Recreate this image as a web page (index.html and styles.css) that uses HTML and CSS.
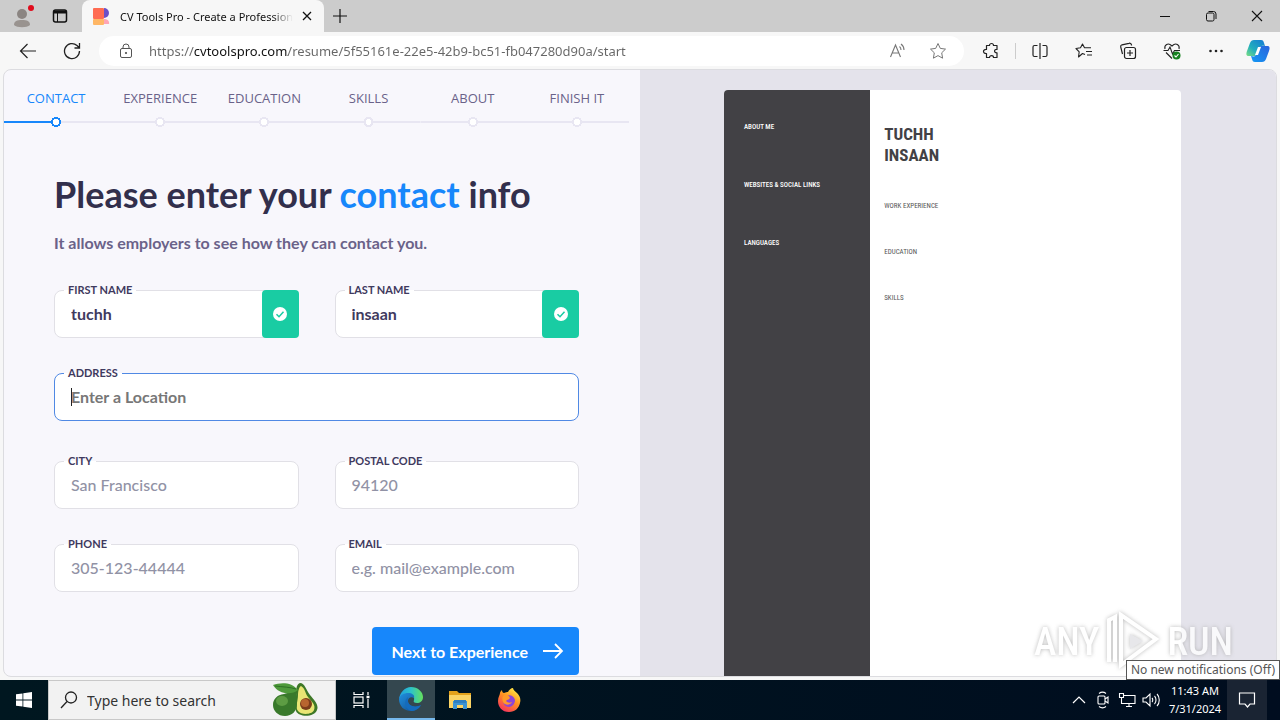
FILE: index.html
```html
<!DOCTYPE html>
<html lang="en">
<head>
    <meta charset="UTF-8">
    <meta name="viewport" content="width=device-width, initial-scale=1.0">
    <title>CV Tools Pro - Create a Professional Resume</title>
    <link rel="stylesheet" href="styles.css">
</head>
<body>
    <header class="tab-strip">
        <button class="profile" aria-label="Profile">
            <svg width="26" height="26" viewBox="0 0 26 26"><circle cx="13" cy="11" r="5" fill="#8b8582"/><path d="M5 22c0-4 3-5 8-5s8 1 8 5c-3 3-13 3-16 0z" fill="#99938f"/><circle cx="22" cy="5" r="3" fill="#e00b1c"/></svg>
        </button>
        <button class="tab-actions" aria-label="Tab actions">
            <svg width="16" height="16" viewBox="0 0 16 16" fill="none" stroke="#111"><rect x="1.500" y="2" width="13" height="12" rx="2" stroke-width="1.500"/><path d="M2 4h12" stroke-width="3"/><path d="M5.500 5v9"/></svg>
        </button>
        <div class="tab">
            <svg width="17" height="17" viewBox="0 0 17 17"><rect width="11" height="11" rx="1" fill="#ff6b52"/><path d="M11 0a5 5 0 0 1 0 10z" fill="#6b50c8"/><rect y="11" width="11" height="6" rx="1" fill="#ffb765"/><path d="M11 11h1a4 4 0 0 1 4 5h-5z" fill="#ffa5b5"/></svg>
            <span class="tab-title">CV Tools Pro - Create a Professional Resume</span>
            <button class="tab-close" aria-label="Close tab">
                <svg width="10" height="10" viewBox="0 0 10 10" stroke="#111" stroke-width="1.300"><path d="M1 1l8 8M9 1l-8 8"/></svg>
            </button>
        </div>
        <button class="new-tab" aria-label="New tab">
            <svg width="14" height="14" viewBox="0 0 14 14" stroke="#111" stroke-width="1.200"><path d="M7 0v14M0 7h14"/></svg>
        </button>
        <div class="window-buttons">
            <button aria-label="Minimize"><svg width="12" height="12" viewBox="0 0 12 12" stroke="#111"><path d="M1 6.500h10"/></svg></button>
            <button aria-label="Restore"><svg width="12" height="12" viewBox="0 0 12 12" fill="none" stroke="#111"><rect x="1.500" y="3" width="7.500" height="8" rx="1.500"/><path d="M3.500 1.500h5a2.500 2.500 0 0 1 2.500 2.500v5"/></svg></button>
            <button aria-label="Close"><svg width="12" height="12" viewBox="0 0 12 12" stroke="#111" stroke-width="1.100"><path d="M1 1l10 10M11 1L1 11"/></svg></button>
        </div>
    </header>

    <nav class="toolbar">
        <button aria-label="Back"><svg width="18" height="18" viewBox="0 0 18 18" fill="none" stroke="#222" stroke-width="1.200"><path d="M17 9H2M8.500 2L1.500 9l7 7"/></svg></button>
        <button aria-label="Refresh"><svg width="18" height="18" viewBox="0 0 18 18" fill="none" stroke="#222" stroke-width="1.300"><path d="M16.500 9A7.500 7.500 0 1 1 14 3.500l2 2M16.500 1v5h-5"/></svg></button>
        <div class="address-bar">
            <svg width="14" height="16" viewBox="0 0 14 16" fill="none" stroke="#555"><rect x="1.500" y="5.500" width="11" height="9" rx="1.500"/><path d="M4 5.500V4a3 3 0 0 1 6 0v1.500"/><circle cx="7" cy="10" r=".7" fill="#555"/></svg>
            <input class="url" type="text" aria-label="Address and search bar" value="https://cvtoolspro.com/resume/5f55161e-22e5-42b9-bc51-fb047280d90a/start">
            <button aria-label="Read aloud"><svg width="18" height="18" viewBox="0 0 18 18" fill="none" stroke="#777" stroke-width="1.100"><path d="M1.500 15L6.500 3l5 12M3.200 11h6.600M10.500 4.500c1 .8 1.500 2 1.500 3.500M12 2c2 1.500 3 3.300 3 6"/></svg></button>
            <button aria-label="Add to favorites"><svg width="18" height="18" viewBox="0 0 18 18" fill="none" stroke="#777" stroke-linejoin="round"><path d="M9 1.500l2.300 4.900 5.200.7-3.800 3.700.9 5.400L9 13.600l-4.600 2.600.9-5.400L1.500 7.100l5.200-.7z"/></svg></button>
        </div>
        <button aria-label="Extensions"><svg width="18" height="18" viewBox="0 0 18 18" fill="none" stroke="#222" stroke-width="1.200" stroke-linejoin="round"><path d="M4.500 3.500h3a2 2 0 0 1 4 0h3.500v4c-3-.5-3.500 3.500 0 3.300v4.700h-3.500c0-2.500-4-2.500-4 0h-3v-4c-4 .3-4-4.500 0-4z"/></svg></button>
        <span class="divider"></span>
        <button aria-label="Split screen"><svg width="18" height="18" viewBox="0 0 18 18" fill="none" stroke="#222" stroke-width="1.200"><path d="M9 1v16M6.500 3.500h-3a1.500 1.500 0 0 0-1.500 1.500v8a1.500 1.500 0 0 0 1.500 1.500h3M11.500 3.500h3a1.500 1.500 0 0 1 1.500 1.500v8a1.500 1.500 0 0 1-1.500 1.500h-3"/></svg></button>
        <button aria-label="Favorites"><svg width="18" height="18" viewBox="0 0 18 18" fill="none" stroke="#222" stroke-width="1.100" stroke-linejoin="round"><path d="M10 12.500l-2.500-1-4 3.500.7-5.200L1 6.500l4.500-.8L7.500 2l2 3.700H16M11 9.500h6M12 13h5"/></svg></button>
        <button aria-label="Collections"><svg width="18" height="18" viewBox="0 0 18 18" fill="none" stroke="#222" stroke-width="1.200"><rect x="5.500" y="5.500" width="11" height="11" rx="2"/><path d="M11 8v6M8 11h6M3.500 12L1.700 5A2 2 0 0 1 3 2.800l7-1.500a2 2 0 0 1 2.500 1.500v.7"/></svg></button>
        <button aria-label="Browser essentials"><svg width="18" height="18" viewBox="0 0 18 18" fill="none" stroke="#222" stroke-width="1.100"><path d="M2 7C1 3 5 0 9 4c4-4 8-1 7 3M.5 8.500H5L7 5l2.500 7 2-3.500h5.500M3 10.500l6 6"/><circle cx="13.500" cy="13.500" r="4" fill="#16811f" stroke="none"/><path d="M11.500 13.500l1.500 1.500 2.500-3" stroke="#fff"/></svg></button>
        <button aria-label="Settings and more"><svg width="18" height="18" viewBox="0 0 18 18" fill="#222"><circle cx="3.500" cy="9" r="1.300"/><circle cx="9" cy="9" r="1.300"/><circle cx="14.500" cy="9" r="1.300"/></svg></button>
        <button class="copilot" aria-label="Copilot">
            <svg width="24" height="24" viewBox="0 0 24 24">
                <defs>
                    <linearGradient id="copilotLeft" x1="0" y1="1" x2="1" y2="0"><stop offset="0" stop-color="#7ade82"/><stop offset=".4" stop-color="#21aebd"/><stop offset="1" stop-color="#1578d5"/></linearGradient>
                    <linearGradient id="copilotRight" x1="0" y1="1" x2="1" y2="0"><stop offset="0" stop-color="#1399f4"/><stop offset="1" stop-color="#2b63dc"/></linearGradient>
                </defs>
                <path d="M8 1h7c2 0 2.500 1 3 3l1 3c-4-1-5 0-6 3l-2 5c-.6 2-2 2-4 2H3c-3 0-3-2-2-5l3-8c.8-2 2-3 4-3z" fill="url(#copilotLeft)"/>
                <path d="M16 23H9c-2 0-2.500-1-3-3l-1-3c4 1 5 0 6-3l2-5c.6-2 2-2 4-2h4c3 0 3 2 2 5l-3 8c-.8 2-2 3-4 3z" fill="url(#copilotRight)"/>
                <path d="M12 8h3l-3 8H9z" fill="#fff"/>
            </svg>
        </button>
    </nav>

    <main class="page">
        <section class="editor">
            <ol class="steps">
                <li class="active"><a href="#contact">CONTACT</a></li>
                <li><a href="#experience">EXPERIENCE</a></li>
                <li><a href="#education">EDUCATION</a></li>
                <li><a href="#skills">SKILLS</a></li>
                <li><a href="#about">ABOUT</a></li>
                <li><a href="#finish">FINISH IT</a></li>
            </ol>

            <form class="contact-form">
                <h1>Please enter your <em>contact</em> info</h1>
                <p class="subtitle">It allows employers to see how they can contact you.</p>

                <div class="fields">
                    <div class="field valid">
                        <label for="firstName">FIRST NAME</label>
                        <input id="firstName" type="text" value="tuchh">
                        <span class="check"><svg width="14" height="14" viewBox="0 0 14 14"><circle cx="7" cy="7" r="7" fill="#fff"/><path d="M3.500 7.200L6 9.700l4.500-5" fill="none" stroke="#19cca3" stroke-width="1.500"/></svg></span>
                    </div>
                    <div class="field valid">
                        <label for="lastName">LAST NAME</label>
                        <input id="lastName" type="text" value="insaan">
                        <span class="check"><svg width="14" height="14" viewBox="0 0 14 14"><circle cx="7" cy="7" r="7" fill="#fff"/><path d="M3.500 7.200L6 9.700l4.500-5" fill="none" stroke="#19cca3" stroke-width="1.500"/></svg></span>
                    </div>
                    <div class="field wide focused">
                        <label for="address">ADDRESS</label>
                        <input id="address" type="text" placeholder="Enter a Location">
                    </div>
                    <div class="field">
                        <label for="city">CITY</label>
                        <input id="city" type="text" placeholder="San Francisco">
                    </div>
                    <div class="field">
                        <label for="postal">POSTAL CODE</label>
                        <input id="postal" type="text" placeholder="94120">
                    </div>
                    <div class="field">
                        <label for="phone">PHONE</label>
                        <input id="phone" type="tel" placeholder="305-123-44444">
                    </div>
                    <div class="field">
                        <label for="email">EMAIL</label>
                        <input id="email" type="email" placeholder="e.g. mail@example.com">
                    </div>
                </div>

                <button class="next" type="button">Next to Experience
                    <svg width="22" height="16" viewBox="0 0 22 16" fill="none" stroke="#fff" stroke-width="1.800"><path d="M1 8h19M13 1l7 7-7 7"/></svg>
                </button>
            </form>
        </section>

        <section class="preview">
            <article class="resume">
                <aside class="resume-side">
                    <h3>ABOUT ME</h3>
                    <h3>WEBSITES &amp; SOCIAL LINKS</h3>
                    <h3>LANGUAGES</h3>
                </aside>
                <div class="resume-main">
                    <h2>TUCHH<br>INSAAN</h2>
                    <h3>WORK EXPERIENCE</h3>
                    <h3>EDUCATION</h3>
                    <h3>SKILLS</h3>
                </div>
            </article>
        </section>
    </main>

    <footer class="taskbar">
        <button class="start" aria-label="Start"><svg width="16" height="16" viewBox="0 0 16 16" fill="#fff"><path d="M0 2.300l6.500-.9v6.200H0zM7.300 1.300L16 0v7.600H7.300zM0 8.400h6.500v6.200L0 13.700zM7.300 8.400H16V16l-8.700-1.300z"/></svg></button>
        <div class="search">
            <svg width="18" height="18" viewBox="0 0 18 18" fill="none" stroke="#222" stroke-width="1.300"><circle cx="11" cy="6.500" r="5.500"/><path d="M7 10.500l-6 6.500"/></svg>
            <input type="text" aria-label="Search" placeholder="Type here to search">
            <svg width="46" height="36" viewBox="0 0 46 36">
                <path d="M28 1c5 0 6 7 10 12 5 6 9 10 7 15-2 7-18 8-21 1-3-6 1-12 0-18 0-5 1-9 4-10z" fill="#3e7827"/>
                <path d="M29 4c4 2 4 7 7 11 4 5 8 8 6 13-2 5-13 5-16 1s0-10 0-16c0-4 1-8 3-9z" fill="#e9e574"/>
                <circle cx="34" cy="22" r="6" fill="#7c3d1b"/><circle cx="33" cy="21" r="4" fill="#b8652f"/>
                <path d="M12 12c5-1 8-3 12-4 1 6 1 8 1 14 0 7-5 12-12 12S1 29 1 23s4-10 11-11z" fill="#39792b"/>
                <ellipse cx="10" cy="19" rx="6" ry="5" fill="#5d9c43"/>
                <path d="M1 3c8-3 19-3 25 5-6 5-19 5-25-5z" fill="#4f9a3b"/>
                <path d="M3 4c8 1 15 1 21 3" fill="none" stroke="#2e7025"/>
            </svg>
        </div>
        <div class="apps">
            <button aria-label="Task View"><svg width="18" height="18" viewBox="0 0 18 18" fill="none" stroke="#fff" stroke-width="1.200"><path d="M1 1v2.500h9V1M1 17v-2.500h9V17M15 1v3M15 8v9"/><rect x="1" y="6" width="9" height="6"/><path d="M13.500 6h3" stroke-width="2.500"/></svg></button>
            <button class="running" aria-label="Microsoft Edge">
                <svg width="24" height="24" viewBox="0 0 24 24">
                    <defs>
                        <linearGradient id="edgeTop" x1="0" y1="0" x2="1" y2="0"><stop offset="0" stop-color="#1f9de0"/><stop offset=".5" stop-color="#2dc3c9"/><stop offset="1" stop-color="#65e05c"/></linearGradient>
                        <linearGradient id="edgeBottom" x1="0" y1="0" x2="1" y2="1"><stop offset="0" stop-color="#2090e0"/><stop offset="1" stop-color="#114a8b"/></linearGradient>
                    </defs>
                    <path d="M0 12C1 5 6 0 12 0c7 0 12 5 12 10 0 4-3 6-6 6-3 0-4-1-3-3 1-3-2-5-6-5-5 0-8 2-9 4z" fill="url(#edgeTop)"/>
                    <path d="M0 12c1-4 5-6 9-6 4 0 7 2 6 5-3-2-6 0-6 3 0 4 6 8 13 4-3 4-6 6-10 6C5 24 0 19 0 12z" fill="url(#edgeBottom)"/>
                    <path d="M9 10c-5 4-3 12 3 14 4 0 8-2 10-6-6 3-12 1-13-3-.5-2 0-4 0-5z" fill="#146bbd"/>
                </svg>
            </button>
            <button aria-label="File Explorer"><svg width="22" height="20" viewBox="0 0 22 20"><path d="M0 1h8l2 2h12v5H0z" fill="#e4a21b"/><path d="M0 5h22v13H0z" fill="#fbd465"/><path d="M4 11h14v8h-4v-4H8v4H4z" fill="#3c94d3"/><path d="M5 10h12v3H5z" fill="#2d7fc1"/></svg></button>
            <button aria-label="Firefox">
                <svg width="24" height="24" viewBox="0 0 24 24">
                    <defs><linearGradient id="foxFire" x1=".8" y1="0" x2=".2" y2="1"><stop offset="0" stop-color="#fff04a"/><stop offset=".45" stop-color="#ff9320"/><stop offset="1" stop-color="#f52c62"/></linearGradient></defs>
                    <path d="M5 2c0 2 1 3 2 3 2-1 3-1 4-1 1-2 3-4 5-4 0 2 2 3 4 5 3 3 4 6 3 10-1 5-5 9-11 9C5 24 1 19 1 13c0-4 2-6 2-8 0-1 1-2 2-3z" fill="url(#foxFire)"/>
                    <path d="M8 9c3-3 9-2 10 3 0 4-3 7-6 7-4 0-7-4-5-7 2-1 4 0 5-1-1-1-3-1-4-2z" fill="#8d45d8"/>
                    <path d="M7 7c3-1 5 0 6 3-1 2-3 1-4 3 2 2 4 2 6 1-1 3-7 4-9 0-1-3-1-5 1-7z" fill="#ff9a28"/>
                </svg>
            </button>
        </div>
        <div class="tray">
            <button aria-label="Show hidden icons"><svg width="14" height="14" viewBox="0 0 14 14" fill="none" stroke="#fff" stroke-width="1.200"><path d="M1 10l6-6 6 6"/></svg></button>
            <button aria-label="Meet now"><svg width="16" height="18" viewBox="0 0 16 18" fill="none" stroke="#fff" stroke-width="1.100"><rect x="3" y="5" width="7" height="8" rx="1"/><path d="M10 8l3-2v6l-3-2M4 2.500c2-1.500 5-1.500 7 0M4 15.500c2 1.500 5 1.500 7 0"/></svg></button>
            <button aria-label="Network"><svg width="18" height="16" viewBox="0 0 18 16" fill="none" stroke="#fff" stroke-width="1.100"><path d="M6 3.500h11v8H5M11 11.500v3M8 14.500h6M1.500 1.500h4v4h-4zM3.500 5.500v6h3"/></svg></button>
            <button aria-label="Volume"><svg width="18" height="16" viewBox="0 0 18 16" fill="none" stroke="#fff" stroke-width="1.100"><path d="M1 6h3l4-4v12l-4-4H1zM10 6c1 1 1 3 0 4M12.500 4c2 2 2 6 0 8M15 2c3 3 3 9 0 12"/></svg></button>
            <time class="clock">11:43 AM<br>7/31/2024</time>
            <button class="notifications" aria-label="Notifications"><svg width="18" height="18" viewBox="0 0 18 18" fill="none" stroke="#fff" stroke-width="1.200"><path d="M1.500 2h15v11H12l-2.500 3L7 13H1.500z"/></svg></button>
        </div>
        <div class="tooltip">No new notifications (Off)</div>
        <div class="watermark">
            <span>ANY</span>
            <svg width="60" height="64" viewBox="0 0 60 64" fill="none" stroke="#fff" stroke-width="4"><path d="M6 52V10l6-3v45"/><path d="M18 5l35 24-35 26z"/><path d="M27 24l13 7-13 8z" fill="#e2e2e6" stroke="none"/></svg>
            <span>RUN</span>
        </div>
    </footer>
</body>
</html>
```
FILE: styles.css
```css
* {
    box-sizing: border-box;
}

body {
    margin: 0;
    height: 100vh;
    display: flex;
    flex-direction: column;
    overflow: hidden;
    background: #f7f7f7;
    font-family: "Noto Sans", sans-serif;
    color: #111;
}

button,
input {
    font: inherit;
    color: inherit;
    border: none;
    background: none;
    padding: 0;
    margin: 0;
    outline: none;
}

button {
    display: flex;
    align-items: center;
    justify-content: center;
    flex-shrink: 0;
    cursor: pointer;
}

/* Browser tabs */
.tab-strip {
    display: flex;
    height: 32px;
    flex-shrink: 0;
    background: #cccccc;
}

.profile {
    width: 44px;
}

.tab-actions {
    width: 32px;
    margin-right: 6px;
}

.tab {
    display: flex;
    align-items: center;
    width: 242px;
    padding: 0 11px;
    border-radius: 8px 8px 0 0;
    background: #f7f7f7;
}

.tab-title {
    flex: 1;
    margin-left: 10px;
    font-size: 11px;
    white-space: nowrap;
    overflow: hidden;
    mask-image: linear-gradient(90deg, #000 88%, transparent);
}

.tab-close {
    width: 24px;
    height: 24px;
    margin-left: 2px;
    margin-right: -6px;
}

.new-tab {
    width: 32px;
}

.window-buttons {
    display: flex;
    margin-left: auto;
}

.window-buttons button {
    width: 46px;
}

/* Browser toolbar */
.toolbar {
    display: flex;
    align-items: center;
    height: 37px;
    flex-shrink: 0;
    padding: 0 2px 0 6px;
}

.toolbar > button {
    width: 44px;
    height: 32px;
}

.toolbar .copilot {
    width: 40px;
}

.address-bar {
    flex: 1;
    display: flex;
    align-items: center;
    height: 30px;
    margin: 0 5px;
    padding: 0 6px 0 20px;
    border-radius: 15px;
    background: #fff;
}

.address-bar button {
    width: 40px;
    height: 28px;
}

.url {
    flex: 1;
    min-width: 0;
    margin-left: 16px;
    font-size: 13px;
    color: transparent;
    caret-color: #111;
    background: linear-gradient(90deg, #666 45px, #111 45px, #111 139px, #666 139px);
    background-clip: text;
}

.divider {
    width: 1px;
    height: 16px;
    margin: 0 2px;
    background: #ccc;
}

/* Web page */
.page {
    flex: 1;
    min-height: 0;
    display: grid;
    grid-template-columns: 1fr 1fr;
    margin: 0 3px 3px;
    overflow: hidden;
    border: 1px solid #dcdce0;
    border-radius: 8px;
    background: #f8f7fc;
    font-family: Lato, sans-serif;
}

.editor {
    min-height: 0;
    overflow: hidden;
}

.steps {
    display: grid;
    grid-template-columns: repeat(6, 1fr);
    margin: 0 11px 0 0;
    padding: 19px 0 0;
    list-style: none;
    font-family: "Open Sans", sans-serif;
    font-size: 13px;
    line-height: 18px;
    text-align: center;
}

.steps a {
    color: #6a6289;
    text-decoration: none;
    white-space: nowrap;
}

.steps li::after {
    content: "";
    display: block;
    height: 10px;
    margin-top: 10px;
    background:
        radial-gradient(circle at center, #fff 3px, #e8e6f2 3px, #e8e6f2 5px, transparent 5px),
        linear-gradient(#e8e6f2, #e8e6f2) center / 100% 2px no-repeat;
}

.steps .active a {
    color: #1787fb;
}

.steps .active::after {
    background:
        radial-gradient(circle at center, #fff 3px, #1787fb 3px, #1787fb 5px, transparent 5px),
        linear-gradient(90deg, #1787fb 50%, #e8e6f2 50%) center / 100% 2px no-repeat;
}

.contact-form {
    padding: 46px 61px 0 50px;
}

.contact-form h1 {
    margin: 0;
    font-size: 36px;
    line-height: 42px;
    font-weight: 700;
    color: #322f4c;
    white-space: nowrap;
}

.contact-form em {
    font-style: normal;
    color: #1787fb;
}

.subtitle {
    margin: 18px 0 37px;
    font-size: 16px;
    line-height: 20px;
    font-weight: 700;
    color: #6a6289;
}

.fields {
    display: grid;
    grid-template-columns: repeat(2, minmax(0, 1fr));
    gap: 35px 36px;
}

.field {
    position: relative;
    display: flex;
    height: 48px;
    border: 1px solid #e1e0e6;
    border-radius: 8px;
    background: #fff;
}

.field label {
    position: absolute;
    top: -8px;
    left: 9px;
    padding: 0 4px;
    font-size: 11px;
    line-height: 14px;
    font-weight: 700;
    color: #3f3a5e;
    background: linear-gradient(#f8f7fc 50%, #fff 50%);
}

.field input {
    flex: 1;
    min-width: 0;
    padding: 0 16px 2px;
    border-radius: 8px;
    font-size: 16px;
    font-weight: 700;
    color: #3f3a5e;
}

.field input::placeholder {
    font-weight: 500;
    color: #9192a5;
    opacity: 1;
}

.wide {
    grid-column: 1 / -1;
    margin-bottom: 5px;
}

.focused {
    border-color: #5089e4;
}

.focused input {
    background: linear-gradient(#222, #222) 16px center / 1px 18px no-repeat;
}

.field.focused input::placeholder {
    font-weight: 700;
    color: #777;
}

.check {
    display: flex;
    align-items: center;
    justify-content: center;
    width: 37px;
    margin: -1px;
    border-radius: 4px;
    background: #19cca3;
}

.next {
    gap: 14px;
    height: 48px;
    margin: 35px 0 0 auto;
    padding: 0 15px 0 19px;
    border-radius: 4px;
    font-size: 16px;
    font-weight: 700;
    color: #fff;
    background: #1787fb;
}

/* Resume preview */
.preview {
    display: flex;
    min-height: 0;
    padding: 20px 95px 0 84px;
    background: #e4e3eb;
}

.resume {
    flex: 1;
    display: grid;
    grid-template-columns: 32% 1fr;
    border-radius: 4px 4px 0 0;
    overflow: hidden;
    background: #fff;
    font-family: "Roboto Condensed", Roboto, sans-serif;
}

.resume-side {
    padding: 30px 20px;
    background: #424145;
}

.resume h3 {
    margin: 0;
    font-size: 7px;
    line-height: 14px;
    font-weight: 500;
    white-space: nowrap;
}

.resume-side h3 {
    margin-bottom: 44px;
    color: #fff;
}

.resume-main {
    padding: 34px 14px;
}

.resume-main h2 {
    margin: 0 0 33px;
    font-size: 17px;
    line-height: 21px;
    color: #424145;
}

.resume-main h3 {
    margin-bottom: 32px;
    font-weight: 400;
    color: #555;
}

/* Windows taskbar */
.taskbar {
    position: relative;
    display: flex;
    height: 40px;
    flex-shrink: 0;
    background: linear-gradient(90deg, #001720, #000d1f);
    color: #fff;
}

.start {
    width: 48px;
}

.search {
    display: flex;
    align-items: center;
    width: 288px;
    padding: 0 17px 0 11px;
    border: 1px solid #c8c8c8;
    background: #f2f2f2;
}

.search input {
    flex: 1;
    min-width: 0;
    margin-left: 9px;
    font-size: 14px;
}

.search input::placeholder {
    color: #333;
    opacity: 1;
}

.apps {
    display: flex;
    gap: 1px;
    margin-left: 2px;
}

.apps button {
    width: 48px;
}

.apps .running {
    background: #34474f;
    border-bottom: 2px solid #76b9ed;
}

.tray {
    display: flex;
    margin-left: auto;
    padding-right: 13px;
}

.tray button {
    width: 24px;
}

.clock {
    width: 64px;
    padding-top: 2px;
    font-size: 11px;
    line-height: 18px;
    text-align: center;
    white-space: nowrap;
}

.tray .notifications {
    width: 40px;
    background: #1a2433;
}

.tooltip {
    position: absolute;
    right: 0;
    bottom: 40px;
    padding: 0 4px;
    border: 1px solid #555;
    font-size: 12px;
    line-height: 18px;
    color: #555;
    background: #fff;
    z-index: 2;
}

.watermark {
    position: absolute;
    right: 47px;
    bottom: 46px;
    display: flex;
    align-items: center;
    gap: 4px;
    font-family: "Roboto Condensed", Roboto, sans-serif;
    font-size: 38px;
    line-height: 40px;
    font-weight: 500;
    color: #fff;
    opacity: 0.8;
    filter: drop-shadow(0 0 2px #aaa);
}
```
